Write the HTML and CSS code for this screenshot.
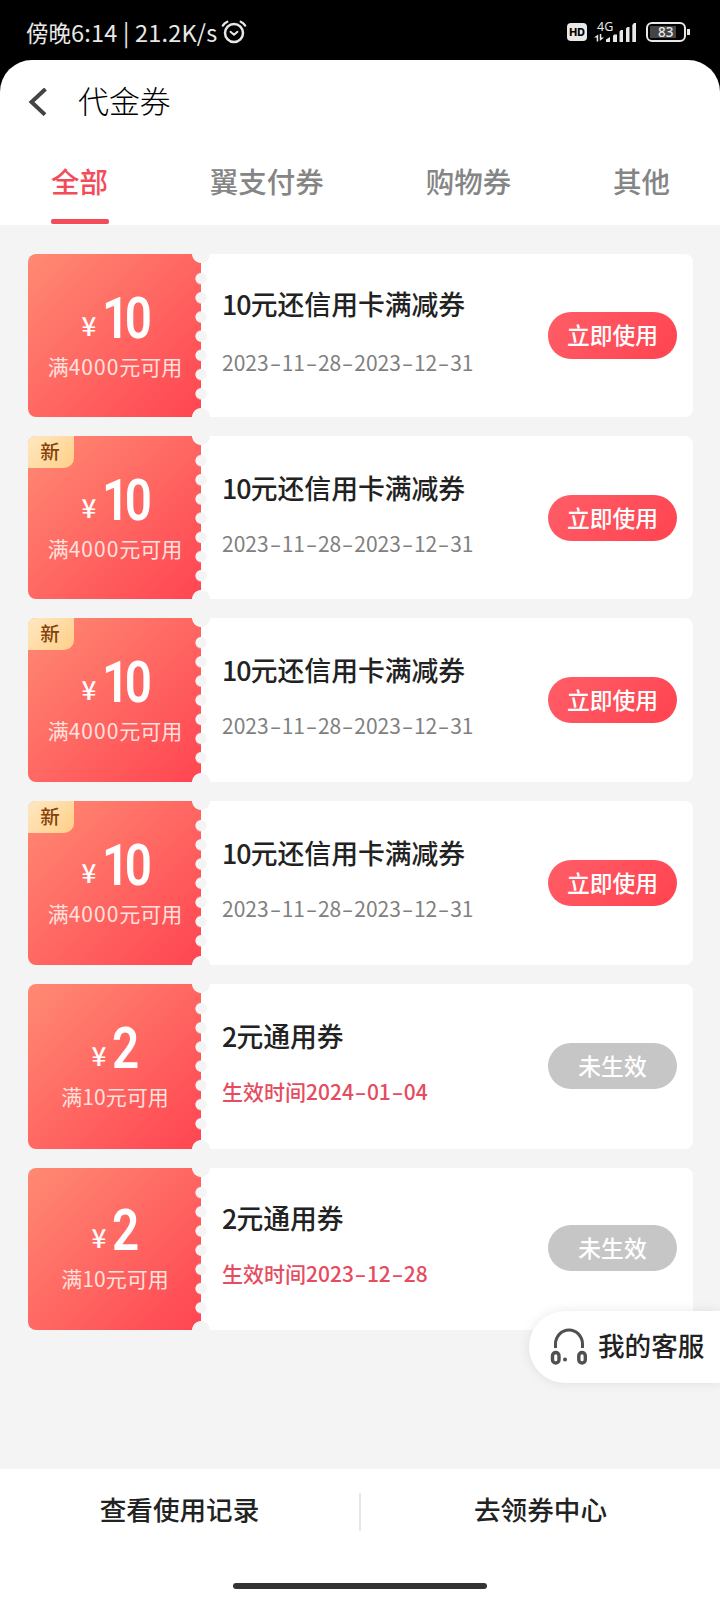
FILE: index.html
```html
<!DOCTYPE html>
<html lang="zh-CN">
<head>
<meta charset="utf-8">
<title>代金券</title>
<link rel="stylesheet" href="styles.css">
</head>
<body>
<div class="phone">
  <div class="status">
    <div class="status-left">
      <span class="clock">傍晚<span class="clock-num">6:14 | 21.2K/s</span></span>
      <svg class="alarm" width="26" height="24" viewBox="0 0 26 24" fill="none" stroke="#e8e8e8" stroke-linecap="round" stroke-linejoin="round">
        <circle cx="13" cy="13" r="9" stroke-width="2.5"/>
        <path d="M9.5 11.8l3.5 3 3.5-3" stroke-width="2"/>
        <path d="M1.8 5.6Q3.4 3 6.3 1.7M24.2 5.6Q22.6 3 19.7 1.7" stroke-width="2.3"/>
      </svg>
    </div>
    <div class="status-right">
      <span class="hd">HD</span>
      <span class="network">
        <span class="gen">4G</span>
        <svg width="43" height="20" viewBox="0 0 43 20" fill="#e8e8e8">
          <path d="M0 14.500L4.200 11.500V18.500H2.700V14.500zM5.800 11V18l4.200-3.500H7.300V11z"/>
          <path d="M12 19v-2.500l4-2.500v5zM19 19v-6l1-1.500h3V19zM25.500 19V8.500l1.500-1.500h2V19zM32 19V5.500L33.500 4h2v15zM38.300 19V2L40 0h2v19z"/>
        </svg>
      </span>
      <span class="battery"><span class="level">83</span></span>
    </div>
  </div>

  <div class="screen">
    <header class="bar">
      <svg class="back" width="20" height="28" viewBox="0 0 20 28" fill="none" stroke="#444" stroke-width="4"><path d="M17.500 1L3.500 14 17 26.700"/></svg>
      <h1>代金券</h1>
    </header>
    <nav class="tabs">
      <span class="tab active">全部</span>
      <span class="tab">翼支付券</span>
      <span class="tab">购物券</span>
      <span class="tab">其他</span>
    </nav>

    <main class="list">
      <article class="coupon first">
        <div class="value">
          <div class="amount"><span class="yen">¥</span><span class="num ten">10</span></div>
          <div class="limit">满<span class="d4">4000</span>元可用</div>
        </div>
        <div class="perf"></div>
        <div class="info"><h2><span class="dn">10</span>元还信用卡满减券</h2><p class="date">2023<i>-</i>11<i>-</i>28<i>-</i>2023<i>-</i>12<i>-</i>31</p></div>
        <div class="btn">立即使用</div>
      </article>
      <article class="coupon">
        <span class="new">新</span>
        <div class="value">
          <div class="amount"><span class="yen">¥</span><span class="num ten">10</span></div>
          <div class="limit">满<span class="d4">4000</span>元可用</div>
        </div>
        <div class="perf"></div>
        <div class="info"><h2><span class="dn">10</span>元还信用卡满减券</h2><p class="date">2023<i>-</i>11<i>-</i>28<i>-</i>2023<i>-</i>12<i>-</i>31</p></div>
        <div class="btn">立即使用</div>
      </article>
      <article class="coupon">
        <span class="new">新</span>
        <div class="value">
          <div class="amount"><span class="yen">¥</span><span class="num ten">10</span></div>
          <div class="limit">满<span class="d4">4000</span>元可用</div>
        </div>
        <div class="perf"></div>
        <div class="info"><h2><span class="dn">10</span>元还信用卡满减券</h2><p class="date">2023<i>-</i>11<i>-</i>28<i>-</i>2023<i>-</i>12<i>-</i>31</p></div>
        <div class="btn">立即使用</div>
      </article>
      <article class="coupon">
        <span class="new">新</span>
        <div class="value">
          <div class="amount"><span class="yen">¥</span><span class="num ten">10</span></div>
          <div class="limit">满<span class="d4">4000</span>元可用</div>
        </div>
        <div class="perf"></div>
        <div class="info"><h2><span class="dn">10</span>元还信用卡满减券</h2><p class="date">2023<i>-</i>11<i>-</i>28<i>-</i>2023<i>-</i>12<i>-</i>31</p></div>
        <div class="btn">立即使用</div>
      </article>
      <article class="coupon">
        <div class="value">
          <div class="amount"><span class="yen">¥</span><span class="num">2</span></div>
          <div class="limit">满<span class="d2">10</span>元可用</div>
        </div>
        <div class="perf"></div>
        <div class="info"><h2><span class="dn">2</span>元通用券</h2><p class="date pending">生效时间2024<i>-</i>01<i>-</i>04</p></div>
        <div class="btn disabled">未生效</div>
      </article>
      <article class="coupon last">
        <div class="value">
          <div class="amount"><span class="yen">¥</span><span class="num">2</span></div>
          <div class="limit">满<span class="d2">10</span>元可用</div>
        </div>
        <div class="perf"></div>
        <div class="info"><h2><span class="dn">2</span>元通用券</h2><p class="date pending">生效时间2023<i>-</i>12<i>-</i>28</p></div>
        <div class="btn disabled">未生效</div>
      </article>
    </main>

    <footer class="footer">
      <div class="links">
        <span class="link">查看使用记录</span>
        <span class="divider"></span>
        <span class="link">去领券中心</span>
      </div>
      <div class="home"></div>
    </footer>
  </div>

  <div class="service">
    <svg width="38" height="38" viewBox="0 0 38 38" fill="none" stroke="#505050" stroke-width="3">
      <path d="M5.500 20V16a13.500 14 0 0 1 27 0v4"/>
      <rect x="2.500" y="24.500" width="6.500" height="10.500" rx="3.250" stroke-width="3.400"/>
      <rect x="28.800" y="24.500" width="6.500" height="10.500" rx="3.250" stroke-width="3.400"/>
      <circle cx="15" cy="31.500" r="2" fill="#505050" stroke="none"/>
    </svg>
    <span>我的客服</span>
  </div>
</div>
</body>
</html>
```

FILE: styles.css
```css
* { box-sizing: border-box; margin: 0; padding: 0; }
body {
  background: #000;
  font-family: "Noto Sans CJK SC", sans-serif;
  color: #222;
}
.phone { position: relative; width: 720px; height: 1600px; overflow: hidden; display: flex; flex-direction: column; }

/* status bar */
.status { height: 60px; flex: none; display: flex; justify-content: space-between; padding: 0 30px 0 26px; color: #e8e8e8; }
.status-left { display: flex; align-items: center; padding-top: 4px; }
.clock { font-size: 22.500px; line-height: 30px; white-space: pre; }
.clock-num { display: inline-block; width: 147px; font-size: 23.500px; letter-spacing: .2px; }
.alarm { margin: -1px 0 0 3px; }
.status-right { display: flex; align-items: center; padding-top: 4px; }
.hd { width: 20px; height: 18px; border-radius: 4px; background: #e8e8e8; color: #000; font: 800 10.500px/19px Inter, sans-serif; text-align: center; }
.network { width: 43px; height: 22px; margin-left: 7px; position: relative; display: flex; align-items: flex-end; }
.gen { position: absolute; left: 3px; top: -1px; font: 12.500px/14px "Noto Sans", sans-serif; }
.battery { position: relative; width: 40px; height: 20px; margin: 0 4px 0 9px; border: 2px solid #e8e8e8; border-radius: 6px; padding: 2px; }
.battery::after { content: ""; position: absolute; right: -6px; top: 5px; width: 3px; height: 6px; background: #e8e8e8; }
.level { display: block; height: 12px; width: 26px; padding-left: 8px; background: #444; font: 500 13.500px/13px "Noto Sans", sans-serif; }

.screen { flex: 1; background: #fff; border-radius: 32px 32px 0 0; display: flex; flex-direction: column; overflow: hidden; }
.bar { height: 82px; flex: none; display: flex; align-items: center; padding-left: 28px; }
.back { margin-top: 2px; }
.bar h1 { margin: 0 0 2px 30px; font-size: 30.900px; font-weight: 300; line-height: 40px; color: #000; }
.tabs { height: 83px; flex: none; display: flex; justify-content: space-between; padding: 0 50px 0 51px; font-size: 28.500px; line-height: 40px; font-weight: 500; color: #858585; }
.tab { padding-top: 19px; height: 83px; }
.active { color: #f44b58; position: relative; }
.active::after { content: ""; position: absolute; left: 0; right: -1px; bottom: 1px; height: 5px; border-radius: 2px; background: #f44b58; }

/* coupons */
.list { flex: 1; background: #f4f4f4; padding: 29px 27px 0 28px; display: grid; grid-template-rows: 163px 163px 164px 164px 165px 162px; align-content: start; gap: 19px; }
.coupon { position: relative; display: flex; background: #fff; border-radius: 8px; overflow: hidden; }
.value { width: 173px; display: flex; flex-direction: column; align-items: center; padding-top: 34px; background: linear-gradient(135deg, #ff8a73 0%, #ff4853 95%); color: #fff; }
.amount { display: flex; align-items: baseline; height: 60px; line-height: 60px; margin-left: -4px; }
.yen { position: relative; top: -2px; font-size: 26px; width: 22px; text-align: center; font-weight: 500; }
.num { display: block; width: 25px; margin-left: 2px; font-family: Roboto, sans-serif; font-weight: 600; font-size: 58px; letter-spacing: -5.500px; transform: scaleX(.82); transform-origin: 0 50%; }
.ten { width: 45px; }
.limit { margin: 3px 0 0 1px; font-size: 21px; line-height: 30px; color: #ffe1de; white-space: nowrap; }
.d4 { letter-spacing: 1px; }
.perf { position: absolute; left: 164px; top: 0; bottom: 0; width: 18px; background: radial-gradient(circle at 9px 0, #f4f4f4 8.500px, transparent 9.300px) top / 18px 12px no-repeat, radial-gradient(circle at 9px 12px, #f4f4f4 8.500px, transparent 9.300px) bottom / 18px 12px no-repeat; }
.perf::before { content: ""; position: absolute; left: 0; top: 15.400px; width: 18px; height: 134.400px; background: radial-gradient(circle at 9px 9.600px, #f4f4f4 5.200px, transparent 6px) 0 0 / 18px 19.200px; }
.info { flex: 1; padding: 32px 0 0 21px; white-space: nowrap; }
.info h2 { font-size: 26.800px; line-height: 40px; font-weight: 500; }
.first .info { padding-top: 30px; }
.first .date { margin-top: 23px; }
.dn { letter-spacing: -.9px; }
.date { margin-top: 20px; font-size: 21px; line-height: 30px; color: #808080; }
.date i { display: inline-block; width: 13px; text-align: center; font-style: normal; transform: scaleX(1.600); }
.pending { color: #e64c5f; font-weight: 500; }
.btn { width: 129px; height: 46px; margin: 59px 16px 0 0; border-radius: 23px; background: linear-gradient(135deg, #ff5e68, #ff4350); color: #fff; font-size: 22.800px; font-weight: 500; line-height: 46px; text-align: center; }
.first .btn { margin-top: 58px; height: 47px; }
.last .value { padding-top: 32px; }
.last .info { padding-top: 30px; }
.last .btn { margin-top: 57px; }
.disabled { background: #c6c6c6; }
.new { position: absolute; left: 0; top: 0; width: 46px; height: 32px; border-radius: 0 0 10px 0; background: linear-gradient(135deg, #ffe8c2, #ffcf87); color: #85420a; font-size: 19.500px; font-weight: 500; line-height: 29px; text-align: center; padding-right: 2px; }

/* bottom bar */
.footer { height: 131px; flex: none; display: flex; flex-direction: column; align-items: center; justify-content: space-between; padding: 21px 0 11px; }
.links { width: 720px; display: flex; align-items: center; font-size: 26.600px; font-weight: 500; line-height: 38px; }
.link { flex: 1; text-align: center; padding-bottom: 5px; }
.divider { width: 2px; height: 38px; background: #e6e6e6; }
.home { width: 254px; height: 6px; border-radius: 3px; background: #333; }

.service { position: absolute; right: 0; top: 1311px; width: 191px; height: 72px; border-radius: 36px 0 0 36px; background: #fff; box-shadow: 0 0 12px rgba(0,0,0,.09); display: flex; align-items: center; gap: 10px; padding-left: 21px; font-size: 26.600px; font-weight: 500; white-space: nowrap; }
.service span { margin-top: -5px; }
```
